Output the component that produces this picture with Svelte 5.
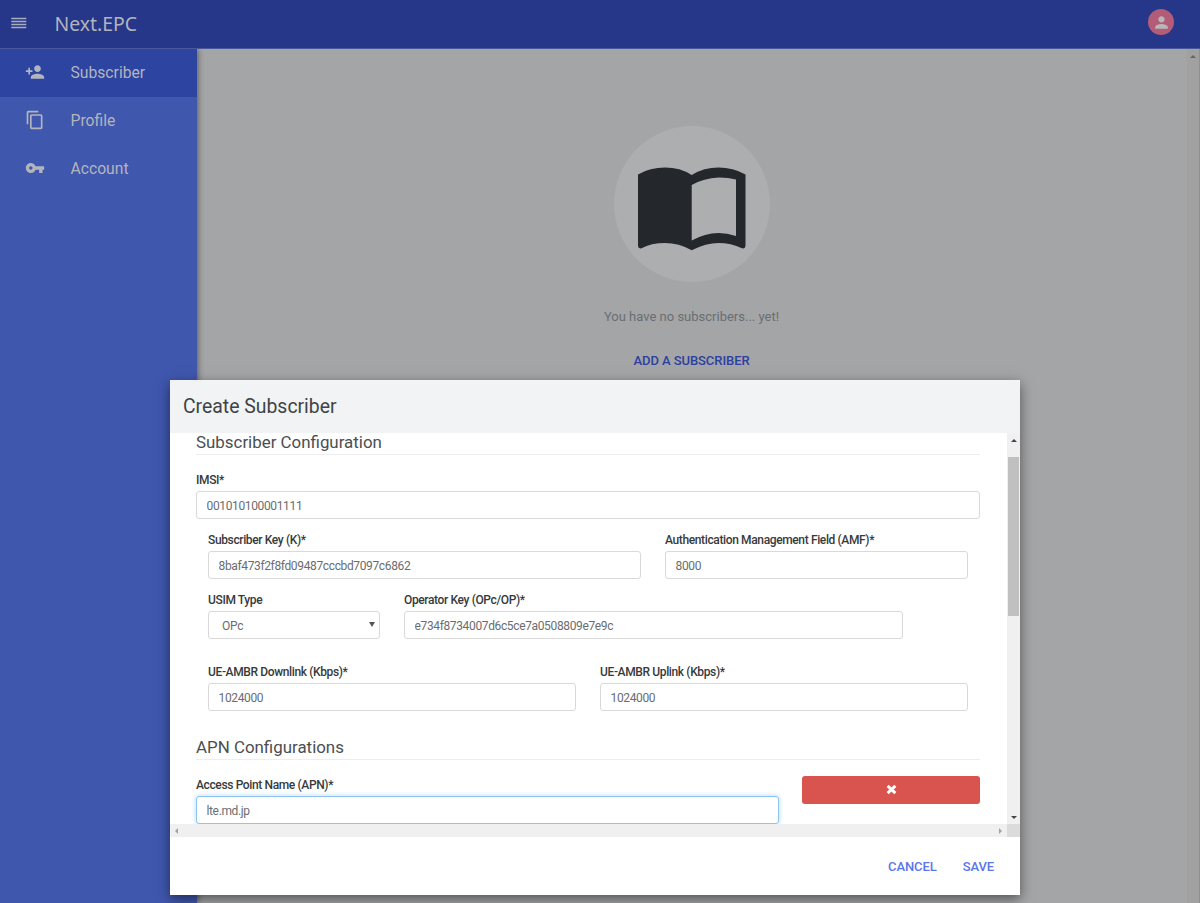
<script lang="ts">
    const navItems = [
        {
            label: "Subscriber",
            icon: "M15 12c2.21 0 4-1.79 4-4s-1.79-4-4-4-4 1.79-4 4 1.79 4 4 4zm-9-2V7H4v3H1v2h3v3h2v-3h3v-2H6zm9 4c-2.67 0-8 1.34-8 4v2h16v-2c0-2.66-5.33-4-8-4z",
        },
        {
            label: "Profile",
            icon: "M16 1H4c-1.1 0-2 .9-2 2v14h2V3h12V1zm3 4H8c-1.1 0-2 .9-2 2v14c0 1.1.9 2 2 2h11c1.1 0 2-.9 2-2V7c0-1.1-.9-2-2-2zm0 16H8V7h11v14z",
        },
        {
            label: "Account",
            icon: "M12.65 10C11.83 7.67 9.61 6 7 6c-3.31 0-6 2.69-6 6s2.69 6 6 6c2.61 0 4.83-1.67 5.65-4H17v4h4v-4h2v-4H12.65zM7 14c-1.1 0-2-.9-2-2s.9-2 2-2 2 .9 2 2-.9 2-2 2z",
        },
    ];

    let active = $state("Subscriber");
    let imsi = $state("001010100001111");
    let key = $state("8baf473f2f8fd09487cccbd7097c6862");
    let amf = $state("8000");
    let opType = $state("OPc");
    let opKey = $state("e734f8734007d6c5ce7a0508809e7e9c");
    let downlink = $state("1024000");
    let uplink = $state("1024000");
    let apn = $state("lte.md.jp");
</script>

<div class="app">
    <header>
        <svg class="menu" viewBox="0 0 16 12" aria-hidden="true">
            <path d="M.3 1.5h15M.3 4.5h15M.3 7.5h15M.3 10.5h15" />
        </svg>
        <span class="brand">Next.EPC</span>
        <span class="avatar">
            <svg viewBox="0 0 24 24" aria-hidden="true">
                <path d="M12 12c2.21 0 4-1.79 4-4s-1.79-4-4-4-4 1.79-4 4 1.79 4 4 4zm0 2c-2.67 0-8 1.34-8 4v2h16v-2c0-2.66-5.33-4-8-4z" />
            </svg>
        </span>
    </header>

    <div class="content">
        <nav>
            {#each navItems as item}
                <button
                    class="nav-item"
                    class:active={active === item.label}
                    onclick={() => (active = item.label)}
                >
                    <svg viewBox="0 0 24 24" aria-hidden="true"><path d={item.icon} /></svg>
                    <span>{item.label}</span>
                </button>
            {/each}
        </nav>

        <main>
            <div class="blank">
                <div class="circle">
                    <svg viewBox="0 0 108 84" aria-hidden="true">
                        <path
                            fill-rule="evenodd"
                            d="M0 7.5Q12 .6 27 .6T53.7 8Q66 .6 80.5 .6T107.5 7.5V79Q107.3 82 104 81.3Q93 76 80.5 76T53.7 83.3Q41 76 27 76T3.6 81.3Q.2 82 0 79ZM53.7 18V73.6Q67 66 80.5 66Q89 66 98 69V12.6Q90 10.4 80.5 10.5Q66 11 53.7 18Z"
                        />
                    </svg>
                </div>
                <p>You have no subscribers... yet!</p>
                <button class="add">ADD A SUBSCRIBER</button>
            </div>
            <div class="page-scroll"><i class="arrow up"></i></div>
        </main>
    </div>

    <div class="modal" role="dialog" aria-label="Create Subscriber">
        <div class="modal-header">Create Subscriber</div>

        <div class="modal-body">
            <div class="form">
                <h2>Subscriber Configuration</h2>
                <label class="field imsi">
                    <span>IMSI*</span>
                    <input bind:value={imsi} />
                </label>
                <div class="row keys">
                    <label class="field">
                        <span>Subscriber Key (K)*</span>
                        <input bind:value={key} />
                    </label>
                    <label class="field">
                        <span>Authentication Management Field (AMF)*</span>
                        <input bind:value={amf} />
                    </label>
                </div>
                <div class="row operator">
                    <label class="field">
                        <span>USIM Type</span>
                        <div class="select">
                            <select bind:value={opType}>
                                <option>OPc</option>
                                <option>OP</option>
                            </select>
                            <i class="caret"></i>
                        </div>
                    </label>
                    <label class="field">
                        <span>Operator Key (OPc/OP)*</span>
                        <input bind:value={opKey} />
                    </label>
                </div>
                <div class="row ambr">
                    <label class="field">
                        <span>UE-AMBR Downlink (Kbps)*</span>
                        <input bind:value={downlink} />
                    </label>
                    <label class="field">
                        <span>UE-AMBR Uplink (Kbps)*</span>
                        <input bind:value={uplink} />
                    </label>
                </div>

                <h2 class="apn-title">APN Configurations</h2>
                <div class="apn">
                    <label class="field">
                        <span>Access Point Name (APN)*</span>
                        <input class="focused" bind:value={apn} />
                    </label>
                    <button class="remove" aria-label="Remove APN">
                        <svg viewBox="0 0 10 10" aria-hidden="true">
                            <path d="M1.5 1.7l7 6.6M8.5 1.7l-7 6.6" />
                        </svg>
                    </button>
                </div>
            </div>
            <div class="vbar">
                <i class="arrow up"></i>
                <div class="thumb"></div>
                <i class="arrow down"></i>
            </div>
            <div class="hbar">
                <i class="arrow left"></i>
                <i class="arrow right"></i>
            </div>
            <div class="corner"></div>
        </div>

        <div class="modal-footer">
            <button>CANCEL</button>
            <button>SAVE</button>
        </div>
    </div>
</div>

<style>
    :global(body) {
        margin: 0;
    }

    .app {
        position: relative;
        display: flex;
        flex-direction: column;
        width: 1200px;
        height: 903px;
        overflow: hidden;
        font-family: Roboto, sans-serif;
        color: #373a3c;
    }

    .app * {
        box-sizing: border-box;
    }

    button {
        padding: 0;
        border: 0;
        background: none;
        font: inherit;
        cursor: pointer;
    }

    header {
        display: flex;
        align-items: center;
        flex: none;
        height: 49px;
        padding: 0 26px 0 11px;
        border-bottom: 1px solid #4a5798;
        background: #263689;
    }

    .menu {
        width: 16px;
        height: 12px;
        margin-top: -2px;
        fill: none;
        stroke: #a9acba;
        stroke-width: 1.3;
    }

    .brand {
        flex: 1;
        margin: -2px 0 0 27.5px;
        font-family: "Noto Sans", sans-serif;
        font-size: 19.4px;
        color: #b2b4bc;
    }

    .avatar {
        display: flex;
        align-items: center;
        justify-content: center;
        width: 26px;
        height: 26px;
        margin-top: -4px;
        border-radius: 50%;
        background: #b25c78;
    }

    .avatar svg {
        width: 19px;
        height: 19px;
        fill: #b9b6b9;
    }

    .content {
        display: flex;
        flex: 1;
        min-height: 0;
    }

    nav {
        z-index: 1;
        width: 197px;
        background: #4057ae;
        box-shadow: 1px 0 6px rgba(0, 0, 0, 0.45);
        clip-path: inset(0 -12px 0 0);
    }

    .nav-item {
        display: flex;
        align-items: center;
        width: 100%;
        height: 48px;
        padding: 0 0 2px 25px;
        color: #b2b5bc;
        font-size: 15.7px;
    }

    .nav-item.active {
        background: #2d44a1;
    }

    .nav-item svg {
        width: 20px;
        height: 20px;
        margin-right: 25.5px;
        fill: currentColor;
    }

    main {
        display: flex;
        flex: 1;
        background: #a4a5a7;
    }

    .blank {
        display: flex;
        flex: 1;
        flex-direction: column;
        align-items: center;
        padding: 77px 1px 0 0;
    }

    .circle {
        display: flex;
        align-items: center;
        justify-content: center;
        width: 156px;
        height: 156px;
        border-radius: 50%;
        background: #adaeb0;
    }

    .circle svg {
        width: 108px;
        height: 84px;
        margin-top: 9px;
        fill: #24272b;
    }

    .blank p {
        margin: 25px 0 0;
        color: #6a6e72;
        font-size: 13px;
        line-height: 20px;
    }

    .add {
        margin-top: 24px;
        color: #2c40a0;
        font-size: 13px;
        font-weight: 500;
        letter-spacing: -0.07px;
        line-height: 20px;
    }

    .page-scroll {
        display: flex;
        justify-content: center;
        width: 13px;
        padding-top: 6px;
        border-right: 1px solid #8d8f91;
        background: #a1a1a1;
    }

    .arrow {
        width: 0;
        height: 0;
        border: 3px solid transparent;
    }

    .arrow.up {
        border-top: 0;
        border-bottom-color: #444;
    }

    .page-scroll .arrow.up {
        border-bottom-color: #666;
    }

    .arrow.down {
        border-bottom: 0;
        border-top-color: #444;
    }

    .arrow.left {
        border-left: 0;
        border-right-color: #a3a3a3;
    }

    .arrow.right {
        border-right: 0;
        border-left-color: #a3a3a3;
    }

    .modal {
        position: absolute;
        top: 380px;
        left: 170px;
        z-index: 2;
        display: flex;
        flex-direction: column;
        width: 850px;
        height: 515px;
        background: #fff;
        box-shadow: 0 4px 12px rgba(0, 0, 0, 0.5);
    }

    .modal-header {
        height: 53px;
        padding-left: 13px;
        background: #f1f3f5;
        color: #404346;
        font-size: 19.4px;
        line-height: 53px;
    }

    .modal-body {
        display: grid;
        grid-template: 391px 13px / 837px 13px;
    }

    .form {
        display: flex;
        flex-direction: column;
        padding: 0 27px 0 26px;
        overflow: hidden;
    }

    h2 {
        flex: none;
        height: 22px;
        margin: 0;
        border-bottom: 1px solid #eee;
        color: #4b4e51;
        font-size: 16.9px;
        font-weight: 400;
        line-height: 19px;
    }

    .apn-title {
        height: 23px;
        margin-top: 26px;
        line-height: 20px;
    }

    .field {
        display: flex;
        flex-direction: column;
        gap: 3px;
        font-size: 12px;
        font-weight: 500;
        letter-spacing: -0.37px;
        line-height: 16px;
    }

    input,
    select {
        width: 100%;
        height: 28px;
        padding: 1px 9.5px 0;
        border: 1px solid #d9d9d9;
        border-radius: 3px;
        outline: none;
        background: #fff;
        color: #6a6d70;
        font: 12px Roboto, sans-serif;
        letter-spacing: -0.36px;
    }

    select {
        appearance: none;
        padding-left: 13px;
        letter-spacing: -0.2px;
    }

    .select {
        position: relative;
    }

    .caret {
        position: absolute;
        top: 11px;
        right: 5px;
        border: 3px solid transparent;
        border-top: 5px solid #555;
        border-bottom: 0;
    }

    .focused {
        border-color: #8cc4f2;
        box-shadow: 0 0 5px rgba(102, 175, 233, 0.5);
    }

    .imsi {
        margin-top: 17px;
    }

    .row {
        display: grid;
        column-gap: 24px;
        padding: 0 12px;
    }

    .keys {
        grid-template-columns: 433px 303px;
        margin-top: 13px;
    }

    .operator {
        grid-template-columns: 172px 499px;
        margin-top: 13px;
    }

    .ambr {
        grid-template-columns: 368px 368px;
        margin-top: 25px;
    }

    .apn {
        display: grid;
        grid-template-columns: 583px 178px;
        column-gap: 23px;
        margin-top: 17px;
    }

    .remove {
        display: flex;
        align-items: center;
        justify-content: center;
        height: 28px;
        margin-top: -1px;
        padding-bottom: 1px;
        border-radius: 3px;
        background: #d9534f;
    }

    .remove svg {
        width: 11px;
        height: 11px;
        fill: none;
        stroke: #fff;
        stroke-width: 2.7;
    }

    .vbar {
        display: flex;
        flex-direction: column;
        align-items: center;
        padding: 6px 0 5px;
        background: #f0f0f0;
    }

    .thumb {
        width: 11px;
        height: 159px;
        margin: 15px 0 auto;
        background: #c0c0c0;
    }

    .hbar {
        display: flex;
        align-items: center;
        justify-content: space-between;
        padding: 0 5px;
        background: #f0f0f0;
    }

    .corner {
        background: #dbdbdb;
    }

    .modal-footer {
        display: flex;
        flex: 1;
        align-items: center;
        justify-content: flex-end;
        gap: 26px;
        padding-right: 26px;
    }

    .modal-footer button {
        color: #5a76ea;
        font-size: 13px;
        font-weight: 500;
        letter-spacing: -0.1px;
    }
</style>
